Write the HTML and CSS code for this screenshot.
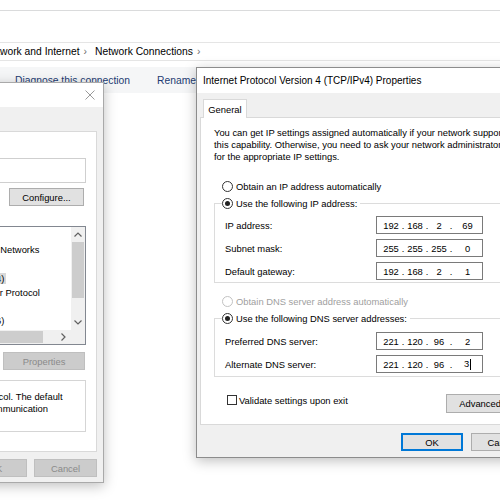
FILE: index.html
```html
<!DOCTYPE html>
<html>
<head>
<meta charset="utf-8">
<link rel="stylesheet" href="styles.css">
</head>
<body>
<div class="screen">
  <div class="explorer">
    <div class="topbar"></div>
    <div class="ribbon"></div>
    <div class="address">
      <div class="crumbs">
        <span>Network and Internet</span><span class="chev">›</span><span>Network Connections</span><span class="chev">›</span>
      </div>
    </div>
    <div class="cmdbar">
      <span>Diagnose this connection</span>
      <span>Rename</span>
    </div>
  </div>

  <section class="dlg parent">
    <div class="titlebar">
      <span class="ttl">Ethernet Properties</span>
      <span class="close"><svg width="10" height="10" viewBox="0 0 10 10"><path d="M0.5 0.5L9.5 9.5M9.5 0.5L0.5 9.5" stroke="#9a9a9a" stroke-width="1" fill="none"/></svg></span>
    </div>
    <div class="body">
      <div class="tabs">
        <div class="tab">Networking</div>
        <div class="tab inactive">Sharing</div>
      </div>
      <div class="page">
        <div class="lbl">Connect using:</div>
        <div class="adapter"><span class="nic"></span><span>Intel(R) Ethernet Connection (2) I219-V</span></div>
        <div class="row-right cfg"><button class="btn w75">Configure...</button></div>
        <div class="lbl items-lbl">This connection uses the following items:</div>
        <div class="list">
          <div class="items">
            <div class="item"><span class="cb"></span><span class="ic"></span><span>Client for Microsoft Networks</span></div>
            <div class="item"><span class="cb"></span><span class="ic"></span><span>File and Printer Sharing for Microsoft Networks</span></div>
            <div class="item"><span class="cb"></span><span class="ic"></span><span>QoS Packet Scheduler</span></div>
            <div class="item"><span class="cb"></span><span class="ic"></span><span class="sel">Internet Protocol Version 4 (TCP/IPv4)</span></div>
            <div class="item"><span class="cb empty"></span><span class="ic"></span><span>Microsoft Network Adapter Multiplexor Protocol</span></div>
            <div class="item"><span class="cb"></span><span class="ic"></span><span>Microsoft LLDP Protocol Driver</span></div>
            <div class="item"><span class="cb"></span><span class="ic"></span><span>Internet Protocol Version 6 (TCP/IPv6)</span></div>
          </div>
          <div class="vscroll">
            <span class="arr v"><svg width="8" height="5" viewBox="0 0 8 5"><path d="M0.5 4.5L4 1L7.5 4.5" stroke="#606060" stroke-width="1.2" fill="none"/></svg></span>
            <span class="vthumb"></span>
            <span class="vtrack"></span>
            <span class="arr v"><svg width="8" height="5" viewBox="0 0 8 5"><path d="M0.5 0.5L4 4L7.5 0.5" stroke="#606060" stroke-width="1.2" fill="none"/></svg></span>
          </div>
          <div class="hscroll">
            <span class="arr h"><svg width="5" height="8" viewBox="0 0 5 8"><path d="M4.5 0.5L1 4L4.5 7.5" stroke="#606060" stroke-width="1.2" fill="none"/></svg></span>
            <span class="hthumb"></span>
            <span class="htrack"></span>
            <span class="arr h"><svg width="5" height="8" viewBox="0 0 5 8"><path d="M0.5 0.5L4 4L0.5 7.5" stroke="#606060" stroke-width="1.2" fill="none"/></svg></span>
          </div>
          <div class="corner"></div>
        </div>
        <div class="row-right btnrow">
          <button class="btn w75">Install...</button>
          <button class="btn w75 dis">Uninstall</button>
          <button class="btn props dis">Properties</button>
        </div>
        <div class="desc">Transmission Control Protocol/Internet Protocol. The default<br>wide area network protocol that provides communication<br>across diverse interconnected networks.</div>
      </div>
      <div class="foot">
        <button class="btn w63 dis">OK</button>
        <button class="btn w63 dis">Cancel</button>
      </div>
    </div>
  </section>

  <section class="dlg child">
    <div class="titlebar">
      <span class="ttl">Internet Protocol Version 4 (TCP/IPv4) Properties</span>
      <span class="close"><svg width="10" height="10" viewBox="0 0 10 10"><path d="M0.5 0.5L9.5 9.5M9.5 0.5L0.5 9.5" stroke="#000" stroke-width="1" fill="none"/></svg></span>
    </div>
    <div class="body">
      <div class="tabs">
        <div class="tab general">General</div>
      </div>
      <div class="page">
        <div class="para">You can get IP settings assigned automatically if your network supports<br>this capability. Otherwise, you need to ask your network administrator<br>for the appropriate IP settings.</div>

        <div class="opt first"><span class="radio"></span><span>Obtain an IP address automatically</span></div>
        <fieldset class="grp">
          <legend><span class="radio on"></span><span>Use the following IP address:</span></legend>
          <div class="grp-body">
            <div class="field"><span class="name">IP address:</span><span class="ip"><span class="o">192</span><span class="d">.</span><span class="o">168</span><span class="d">.</span><span class="o">2</span><span class="d">.</span><span class="o last">69</span></span></div>
            <div class="field"><span class="name">Subnet mask:</span><span class="ip"><span class="o">255</span><span class="d">.</span><span class="o">255</span><span class="d">.</span><span class="o">255</span><span class="d">.</span><span class="o last">0</span></span></div>
            <div class="field"><span class="name">Default gateway:</span><span class="ip"><span class="o">192</span><span class="d">.</span><span class="o">168</span><span class="d">.</span><span class="o">2</span><span class="d">.</span><span class="o last">1</span></span></div>
          </div>
        </fieldset>

        <div class="opt off dns"><span class="radio"></span><span>Obtain DNS server address automatically</span></div>
        <fieldset class="grp">
          <legend><span class="radio on"></span><span>Use the following DNS server addresses:</span></legend>
          <div class="grp-body dnsbody">
            <div class="field"><span class="name">Preferred DNS server:</span><span class="ip"><span class="o">221</span><span class="d">.</span><span class="o">120</span><span class="d">.</span><span class="o">96</span><span class="d">.</span><span class="o last">2</span></span></div>
            <div class="field"><span class="name">Alternate DNS server:</span><span class="ip"><span class="o">221</span><span class="d">.</span><span class="o">120</span><span class="d">.</span><span class="o">96</span><span class="d">.</span><span class="o last">3<span class="caret"></span></span></span></div>
          </div>
        </fieldset>

        <div class="validate-row">
          <label class="chk-label"><span class="chk"></span><span>Validate settings upon exit</span></label>
          <button class="btn adv">Advanced...</button>
        </div>
      </div>
      <div class="foot">
        <button class="btn w62 def">OK</button>
        <button class="btn w62">Cancel</button>
      </div>
    </div>
  </section>
</div>
</body>
</html>
```
FILE: styles.css
```css
* { box-sizing: border-box; }
body { margin: 0; font-family: "Liberation Sans", Arial, sans-serif; color: #000; }
.screen { position: relative; width: 500px; height: 500px; overflow: hidden; background: #fff; }

/* Explorer window behind */
.topbar { height: 11px; border-bottom: 1px solid #dadbdc; }
.ribbon { height: 32px; border-bottom: 1px solid #e5e5e5; }
.address { height: 18px; border-bottom: 1px solid #e5e5e5; display: flex; align-items: center; font-size: 10.3px; }
.crumbs { display: flex; align-items: center; margin-left: -16px; white-space: nowrap; }
.chev { color: #6b6b6b; margin: 0 8px 0 4px; }
.cmdbar { margin-top: 6px; height: 26px; background: #f5f6f7; display: flex; align-items: center; gap: 27px; padding-left: 15px; font-size: 10.3px; color: #1c3b72; white-space: nowrap; }

/* Dialog windows */
.dlg { position: absolute; background: #f0f0f0; border: 1px solid #a9a9a9; box-shadow: 0 3px 12px rgba(0,0,0,.25); display: flex; flex-direction: column; font-size: 9.4px; }
.parent { left: -213px; top: 82px; width: 317px; height: 401px; }
.child { left: 196px; top: 67px; width: 344px; height: 391px; border-color: #8c8c8c; }

.titlebar { background: #fff; display: flex; align-items: center; justify-content: space-between; font-size: 10px; white-space: nowrap; }
.parent .titlebar { height: 24px; padding-left: 8px; }
.child .titlebar { height: 25px; padding-left: 6px; }
.close { width: 27px; height: 100%; display: flex; align-items: center; justify-content: center; }
.child .close { width: 30px; }

.body { flex: 1; display: flex; flex-direction: column; padding: 0 6px; }
.child .body { padding: 0 3px; }

.tabs { display: flex; padding-top: 6px; padding-left: 3px; }
.tab { height: 19px; padding: 0 6px; background: #fff; border: 1px solid #d9d9d9; border-bottom: 0; display: flex; align-items: center; margin-bottom: -1px; position: relative; z-index: 1; white-space: nowrap; }
.tab.inactive { background: #f0f0f0; height: 17px; margin-top: 2px; border-left: 0; }
.tab.general { width: 44px; justify-content: center; padding: 0; }

.page { background: #fff; border: 1px solid #d9d9d9; white-space: nowrap; }
.parent .page { height: 321px; padding: 7px 10px 0 9px; }
.child .page { height: 308px; padding: 9px 13px 0 13px; }

/* Parent dialog page */
.lbl { height: 12px; line-height: 12px; }
.items-lbl { margin-top: 4px; }
.adapter { margin-top: 7px; height: 25px; border: 1px solid #cfcfcf; display: flex; align-items: center; gap: 6px; padding-left: 5px; }
.nic { width: 14px; height: 11px; background: #3b7fc4; border: 1px solid #285a8f; }
.row-right { display: flex; justify-content: flex-end; gap: 7px; }
.cfg { margin-top: 5px; padding-right: 2px; }
.btnrow { margin-top: 7px; padding-right: 1px; }

.list { margin-top: 4px; height: 119px; border: 1px solid #828790; display: grid; grid-template-columns: 1fr 14px; grid-template-rows: 1fr 14px; background: #fff; }
.items { overflow: hidden; padding-top: 1px; min-width: 0; }
.item { height: 14.3px; display: flex; align-items: center; padding-left: 3px; }
.cb { width: 11px; height: 11px; border: 1px solid #333; margin-right: 3px; flex: none; position: relative; }
.cb::after { content: ""; position: absolute; left: 3px; top: 0px; width: 3px; height: 6px; border: solid #222; border-width: 0 1.5px 1.5px 0; transform: rotate(45deg); }
.cb.empty::after { display: none; }
.ic { width: 16px; height: 10px; margin-right: 7px; flex: none; background: #4a86c5; border-radius: 1px; }
.sel { background: #d9d9d9; padding: 0 2px; margin-left: -2px; }

.vscroll { background: #f0f0f0; display: flex; flex-direction: column; }
.hscroll { background: #f0f0f0; display: flex; }
.corner { background: #f0f0f0; }
.arr { display: flex; align-items: center; justify-content: center; flex: none; }
.arr.v { height: 15px; }
.arr.h { width: 15px; }
.vthumb { height: 56px; background: #cdcdcd; margin: 0 1px; flex: none; }
.vtrack { flex: 1; }
.hthumb { flex: 1; background: #cdcdcd; margin: 1px 0; }
.htrack { width: 13px; flex: none; }

.desc { margin-top: 10px; height: 52px; border: 1px solid #d5d5d5; padding: 10px 0 0 9px; line-height: 11.5px; }

.foot { display: flex; justify-content: flex-end; gap: 7px; margin-top: 7px; }
.child .foot { margin-top: 8px; gap: 8px; padding-right: 3px; }

/* Buttons */
.btn { height: 18px; border: 1px solid #adadad; background: #e1e1e1; font-family: inherit; font-size: 9.4px; color: #000; padding: 0; display: flex; align-items: center; justify-content: center; flex: none; }
.btn.dis { background: #cccccc; border-color: #bfbfbf; color: #8a8a8a; }
.btn.def { border-color: #0078d7; box-shadow: inset 0 0 0 1px #0078d7; }
.w75 { width: 75px; }
.w63 { width: 63px; }
.w62 { width: 62px; }
.props { width: 82px; }
.adv { width: 76px; height: 19px; margin-top: 1px; }

/* Child dialog page */
.para { line-height: 12px; }
.opt { height: 14px; display: flex; align-items: center; gap: 3px; padding-left: 8px; }
.opt.first { margin-top: 16px; }
.opt.dns { margin-top: 11px; }
.opt.off { color: #a0a0a0; }
.opt.off .radio { border-color: #c2c2c2; }
.radio { width: 11px; height: 11px; border: 1px solid #333; border-radius: 50%; background: #fff; display: inline-flex; align-items: center; justify-content: center; flex: none; vertical-align: middle; }
.radio.on::after { content: ""; width: 5px; height: 5px; border-radius: 50%; background: #222; }

.grp { margin: 3px 0 0; padding: 0; border: 1px solid #dcdcdc; min-width: 0; }
.grp legend { margin-left: 7px; padding: 0 3px 0 0; height: 14px; line-height: 14px; }
.grp legend span { vertical-align: middle; }
.grp legend .radio { margin-right: 3px; }
.grp-body { padding: 6px 0 2px 10px; }
.dnsbody { padding-top: 7px; padding-bottom: 3px; }
.field { display: flex; align-items: center; height: 18px; }
.field + .field { margin-top: 5px; }
.name { width: 151px; }
.ip { width: 107px; height: 18px; border: 1px solid #7a7a7a; display: flex; align-items: center; padding-left: 4px; background: #fff; }
.ip .o { width: 20px; text-align: center; }
.ip .d { width: 4px; text-align: center; }
.ip .o.last { flex: 1; width: auto; }
.caret { display: inline-block; width: 1px; height: 11px; background: #000; margin-left: 1px; vertical-align: middle; }

.validate-row { display: flex; justify-content: space-between; align-items: flex-start; margin-top: 16px; }
.chk-label { display: flex; align-items: center; gap: 2px; height: 14px; padding-left: 13px; }
.chk { width: 10px; height: 10px; border: 1px solid #333; background: #fff; }
```
